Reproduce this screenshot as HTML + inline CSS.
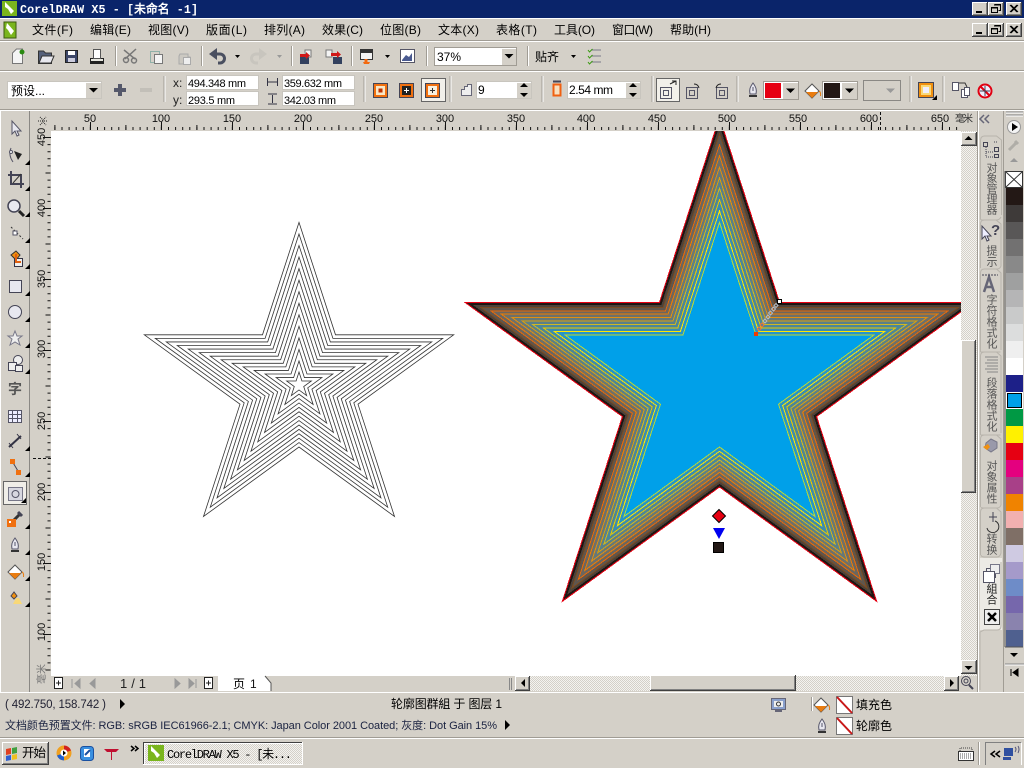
<!DOCTYPE html>
<html><head><meta charset="utf-8"><style>
html,body{margin:0;padding:0;background:#d4d0c8;overflow:hidden;width:1024px;height:768px}
svg{display:block;position:absolute;left:0;top:0}
text{font-family:"Liberation Sans","WenQuanYi Zen Hei","Noto Sans CJK SC",sans-serif;font-size:12px;fill:#000}
.m{font-family:"Liberation Mono","WenQuanYi Zen Hei",monospace}
.r{font-size:11px;text-anchor:middle;fill:#111}
.v{font-size:11px;writing-mode:vertical-rl;fill:#555}
.n{font-size:11px}
</style></head><body>
<svg width="1024" height="768" viewBox="0 0 1024 768" xmlns="http://www.w3.org/2000/svg">
<defs>
<pattern id="h" width="2" height="2" patternUnits="userSpaceOnUse"><rect width="2" height="2" fill="#f4f3f0"/><rect width="1" height="1" fill="#d4d0c8"/><rect x="1" y="1" width="1" height="1" fill="#d4d0c8"/></pattern>
<polygon id="st" vector-effect="non-scaling-stroke" points="0,-162.6 36.5,-50.2 154.7,-50.2 59,19.2 95.5,131.5 0,62 -95.5,131.5 -59,19.2 -154.7,-50.2 -36.5,-50.2"/>
<g id="wb"><rect width="16" height="14" fill="#404040"/><rect width="15" height="13" fill="#fff"/><rect x="1" y="1" width="14" height="12" fill="#808080"/><rect x="1" y="1" width="13" height="11" fill="#d4d0c8"/></g>
<g id="wmin"><use href="#wb"/><rect x="4" y="9" width="6" height="2"/></g>
<g id="wmax"><use href="#wb"/><path d="M6.5 2.500h6v6h-2M6 3h7M3.500 5.500h6v5h-6zM3 6h7" fill="none" stroke="#000"/></g>
<g id="wcl"><use href="#wb"/><path d="M4 3l7 7M5 3l7 7M11 3l-7 7M12 3l-7 7" stroke="#000" fill="none"/></g>
<g id="pen"><path d="M0-7C-3-3-4 0-3 4H3C4 0 3-3 0-7Z" fill="#e8e8f0" stroke="#55556a"/><path d="M0-3V1" stroke="#55556a"/><rect x="-4" y="5" width="8" height="2" fill="#333"/></g>
<g id="fillb"><path d="M-7 0L0-7L7 0L0 7Z" fill="#fff" stroke="#555"/><path d="M-6 1H6L0 7Z" fill="#e97c10"/><path d="M7 0q2 1 1.500 5" fill="none" stroke="#e97c10"/></g>
<path id="tri" d="M0 0h5l-2.500 3z"/>
<path id="tr2" d="M0 0h9l-4.500 4.500z"/>
<path id="mk" d="M5 0V5H0Z"/>
</defs>

<rect width="1024" height="768" fill="#d4d0c8"/>
<!-- title bar -->
<rect width="1024" height="18" fill="#0a246a"/>
<rect x="2" y="1" width="15" height="15" fill="#7ab51d"/><path d="M5 2l9 9-3 3-3-5-3-2z" fill="#fff"/>
<text class="m" x="20" y="13" style="font-size:11.7px;font-weight:bold;fill:#fff" textLength="178">CorelDRAW X5 - [未命名 -1]</text>
<use href="#wmin" x="972" y="2"/><use href="#wmax" x="988" y="2"/><use href="#wcl" x="1006" y="2"/>
<!-- menu bar -->
<rect y="18" width="1024" height="1" fill="#fff"/>
<rect x="4" y="22" width="12" height="16" fill="#7ab51d" stroke="#3c5a10"/><path d="M7 23l7 8-3 4-3-5-2-2z" fill="#fff"/>
<g>
<text x="32" y="34" textLength="41">文件(F)</text>
<text x="90" y="34" textLength="41">编辑(E)</text>
<text x="148" y="34" textLength="41">视图(V)</text>
<text x="206" y="34" textLength="41">版面(L)</text>
<text x="264" y="34" textLength="41">排列(A)</text>
<text x="322" y="34" textLength="41">效果(C)</text>
<text x="380" y="34" textLength="41">位图(B)</text>
<text x="438" y="34" textLength="41">文本(X)</text>
<text x="496" y="34" textLength="41">表格(T)</text>
<text x="554" y="34" textLength="41">工具(O)</text>
<text x="612" y="34" textLength="41">窗口(W)</text>
<text x="670" y="34" textLength="41">帮助(H)</text>
</g>
<use href="#wmin" x="972" y="23"/><use href="#wmax" x="988" y="23"/><use href="#wcl" x="1006" y="23"/>
<rect y="40" width="1024" height="1" fill="#a09c94"/><rect y="41" width="1024" height="1" fill="#fff"/>
<!-- toolbar 1 -->
<g fill="none">
<path d="M12.500 63.500V53l4-4h6v14.500z" fill="#f4f4f4" stroke="#777"/><circle cx="22" cy="52" r="2.500" fill="#2a8a10"/>
<path d="M38.500 63.500V51h5l2 2h6v10.500z" fill="#55607a" stroke="#333"/><path d="M39 63l3-7h12l-3 7z" fill="#e8e8ee" stroke="#333"/>
<rect x="65.500" y="50.500" width="12" height="12" fill="#3c4668" stroke="#222"/><rect x="68" y="51" width="7" height="4" fill="#fff"/><rect x="68" y="58" width="7" height="4" fill="#ccd"/>
<path d="M90.500 58.500h13v5h-13z" fill="#e8e8e0" stroke="#222"/><rect x="93.500" y="49.500" width="7" height="9" fill="#fff" stroke="#555"/><rect x="91" y="61" width="12" height="2" fill="#222"/>
<path d="M115.500 46v20" stroke="#a09c94"/><path d="M116.500 46v20" stroke="#fff"/>
<g stroke="#777" stroke-width="1.500"><path d="M124 50l11 9M136 49l-11 10"/><circle cx="126" cy="60" r="2.500"/><circle cx="134" cy="60.500" r="2.500"/></g>
<rect x="150.500" y="51.500" width="9" height="11" stroke="#8fb0a8"/><rect x="154.500" y="54.500" width="8" height="9" fill="#f4f4f4" stroke="#777"/>
<path d="M180 54h8v3h2v7h-11v-8z" fill="#ccc9c2" stroke="#aaa"/><rect x="183.500" y="57.500" width="7" height="7" fill="#eee" stroke="#aaa"/>
<path d="M201.500 46v20" stroke="#a09c94"/><path d="M202.500 46v20" stroke="#fff"/>
<path d="M212 54h8a4.500 4.500 0 0 1 0 9h-2" stroke="#4a4f60" stroke-width="3"/><path d="M217 48v12l-8-6z" fill="#4a4f60"/>
<path d="M264 54h-8a4.500 4.500 0 0 0 0 9h2" stroke="#c8c5be" stroke-width="3"/><path d="M259 48v12l8-6z" fill="#c8c5be"/>
<use href="#tri" x="235" y="55" fill="#000"/><use href="#tri" x="277" y="55" fill="#999"/>
<path d="M291.500 46v20" stroke="#a09c94"/><path d="M292.500 46v20" stroke="#fff"/>
<rect x="300" y="57" width="9" height="7" fill="#33415f"/><path d="M305 52v-2h6v7h-5z" fill="#f4f4f4" stroke="#777"/><path d="M300 54h6v-2l4 3.500-4 3.500v-2h-6z" fill="#d01818"/>
<rect x="333" y="57" width="9" height="7" fill="#33415f"/><path d="M326 50h6v7h-6z" fill="#f4f4f4" stroke="#777"/><path d="M331 53h6v-2l4 3.500-4 3.500v-2h-6z" fill="#d01818"/>
<path d="M351.500 46v20" stroke="#a09c94"/><path d="M352.500 46v20" stroke="#fff"/>
<rect x="360.500" y="49.500" width="12" height="10" fill="#f4f4f4" stroke="#333"/><rect x="361" y="50" width="11" height="3" fill="#333"/><path d="M363 62h7l-1 2h-5z" fill="#f36a10"/><path d="M366 59v4" stroke="#f36a10" stroke-width="3"/>
<use href="#tri" x="385" y="55" fill="#000"/>
<rect x="400.500" y="49.500" width="14" height="13" fill="#fff" stroke="#556"/><path d="M402 60l4-5 3 2 3-4v8h-10z" fill="#4a5a90"/>
<path d="M426.500 46v20" stroke="#a09c94"/><path d="M427.500 46v20" stroke="#fff"/>
<rect x="434.500" y="47.500" width="82" height="18" fill="#fff" stroke="#a09c94"/><rect x="502" y="49" width="14" height="16" fill="#d4d0c8"/>
</g>
<text x="437" y="61">37%</text>
<use href="#tr2" x="504.500" y="54" fill="#000"/>
<path d="M527.500 46v20" stroke="#a09c94"/><path d="M528.500 46v20" stroke="#fff"/>
<text x="535" y="61" textLength="24">贴齐</text>
<use href="#tri" x="571" y="55" fill="#000"/>
<g fill="none" stroke="#778"><path d="M591 50h10M591 56h10M591 62h10"/></g><g fill="none" stroke="#3a9a10"><path d="M588 50l1.500 2 3-3M588 56l1.500 2 3-3M588 62l1.500 2 3-3"/></g>
<rect y="70" width="1024" height="1" fill="#a09c94"/><rect y="71" width="1024" height="1" fill="#fff"/>
<!-- property bar -->
<rect x="7.500" y="81.500" width="94" height="17" fill="#fff" stroke="#c8c5be"/><rect x="86" y="83" width="15" height="15" fill="#d4d0c8"/>
<text x="11" y="95">预设...</text><use href="#tr2" x="89" y="88" fill="#000"/>
<path d="M114 88h12v4h-12zM118 84h4v12h-4z" fill="#55586a"/><rect x="140" y="88" width="12" height="4" fill="#c2bfb8"/>
<path d="M164 76v26" stroke="#a09c94"/><path d="M165 76v26" stroke="#fff"/>
<text x="173" y="87" style="fill:#222">x:</text><text x="173" y="104" style="fill:#222">y:</text>
<g fill="#fff" stroke="#c8c5be"><rect x="186.500" y="75.500" width="72" height="14"/><rect x="186.500" y="91.500" width="72" height="14"/><rect x="282.500" y="75.500" width="72" height="14"/><rect x="282.500" y="91.500" width="72" height="14"/></g>
<text class="n" x="188" y="87" textLength="58">494.348 mm</text><text class="n" x="188" y="104" textLength="47">293.5 mm</text>
<text class="n" x="284" y="87" textLength="58">359.632 mm</text><text class="n" x="284" y="104" textLength="52">342.03 mm</text>
<g fill="none" stroke="#334"><path d="M267.500 78v8M277.500 78v8M268 82h9"/><path d="M268 94h9M268 104h9M272.500 95v8"/></g>
<path d="M364 76v26" stroke="#a09c94"/><path d="M365 76v26" stroke="#fff"/>
<rect x="421.500" y="78.500" width="24" height="23" fill="#f2f0ea" stroke="#666"/>
<g><rect x="373.500" y="83.500" width="14" height="14" fill="#f07010" stroke="#445"/><rect x="376" y="86" width="9" height="9" fill="#f8e8c8"/><rect x="378.500" y="88.500" width="4" height="4" fill="#c03000"/>
<rect x="399.500" y="83.500" width="14" height="14" fill="#f07010" stroke="#445"/><rect x="402" y="86" width="9" height="9" fill="#222"/><path d="M404 90.500h5M406.500 88v5" stroke="#fff"/>
<rect x="425.500" y="83.500" width="14" height="14" fill="#f07010" stroke="#445"/><rect x="428" y="86" width="9" height="9" fill="#f8f0e0"/><path d="M430 90.500h5M432.500 88v5" stroke="#333"/></g>
<path d="M450 76v26" stroke="#a09c94"/><path d="M451 76v26" stroke="#fff"/>
<path d="M461.500 95.500v-6h3v-3h3v-2h4v11z" fill="#eee" stroke="#667"/>
<rect x="476.500" y="81.500" width="55" height="17" fill="#fff" stroke="#c8c5be"/><rect x="517" y="83" width="14" height="15" fill="#d4d0c8"/>
<text x="478" y="94">9</text><path d="M524 83l4 4h-8zM524 97l4-4h-8z" fill="#000"/>
<path d="M542 76v26" stroke="#a09c94"/><path d="M543 76v26" stroke="#fff"/>
<rect x="553.500" y="84.500" width="7" height="11" fill="#f8e0c0" stroke="#f06010" stroke-width="2"/><path d="M553 81.500h8" stroke="#445" stroke-width="2"/>
<rect x="567.500" y="81.500" width="73" height="17" fill="#fff" stroke="#c8c5be"/><rect x="626" y="83" width="14" height="15" fill="#d4d0c8"/>
<text x="569" y="94" textLength="44">2.54 mm</text><path d="M633 83l4 4h-8zM633 97l4-4h-8z" fill="#000"/>
<path d="M652 76v26" stroke="#a09c94"/><path d="M653 76v26" stroke="#fff"/>
<rect x="656.500" y="78.500" width="23" height="23" fill="#f2f0ea" stroke="#666"/>
<g fill="none" stroke="#556"><rect x="660.500" y="87.500" width="11" height="11"/><rect x="663.500" y="90.500" width="5" height="5"/><path d="M670 84l6-3m0 4v-4h-4" stroke="#222"/>
<rect x="686.500" y="87.500" width="11" height="11"/><rect x="689.500" y="90.500" width="5" height="5"/><path d="M694 84q4 0 5 4" stroke="#222"/>
<rect x="716.500" y="87.500" width="11" height="11"/><rect x="719.500" y="90.500" width="5" height="5"/><path d="M721 84q-4 0-5 4" stroke="#222"/></g>
<path d="M737 76v26" stroke="#a09c94"/><path d="M738 76v26" stroke="#fff"/>
<use href="#pen" x="753" y="90"/>
<rect x="763.500" y="81.500" width="35" height="18" fill="#fff" stroke="#a09c94"/><rect x="765" y="83" width="16" height="15" fill="#e60012"/><rect x="783" y="83" width="15" height="16" fill="#d4d0c8"/><use href="#tr2" x="786" y="88.500" fill="#000"/>
<use href="#fillb" x="812" y="91"/>
<rect x="822.500" y="81.500" width="35" height="18" fill="#fff" stroke="#a09c94"/><rect x="824" y="83" width="16" height="15" fill="#231815"/><rect x="842" y="83" width="15" height="16" fill="#d4d0c8"/><use href="#tr2" x="845" y="88.500" fill="#000"/>
<rect x="863.500" y="80.500" width="37" height="20" fill="#d4d0c8" stroke="#8a8884"/><use href="#tr2" x="886" y="88.500" fill="#999"/>
<path d="M910 76v26" stroke="#a09c94"/><path d="M911 76v26" stroke="#fff"/>
<rect x="918.500" y="82.500" width="15" height="15" fill="#f09010" stroke="#445"/><rect x="921" y="85" width="10" height="10" fill="#f8d878"/><rect x="923" y="87" width="6" height="6" fill="#eef"/><use href="#mk" x="932" y="95" fill="#000"/>
<path d="M943 76v26" stroke="#a09c94"/><path d="M944 76v26" stroke="#fff"/>
<g fill="#fff" stroke="#556"><rect x="952.500" y="82.500" width="6" height="8"/><rect x="961.500" y="89.500" width="6" height="8"/><rect x="964.500" y="87.500" width="5" height="8"/><path d="M959 83h6l2 4" fill="none" stroke="#333"/></g>
<circle cx="985" cy="91" r="6.500" fill="#eef" stroke="#e00012" stroke-width="2"/><path d="M980.500 86.500l9 9" stroke="#e00012" stroke-width="2"/><path d="M985 86v10M980 91h10" stroke="#445"/>
<rect y="109" width="1024" height="1" fill="#a09c94"/><rect y="110" width="1024" height="1" fill="#fff"/>

<!-- canvas -->
<rect x="51" y="131" width="910" height="545" fill="#fff"/>
<path d="M51 130.500H961" stroke="#8a8884"/><path d="M50.500 130V676" stroke="#8a8884"/>
<g transform="translate(299 385)" fill="none" stroke="#333" stroke-width=".8">
<use href="#st"/>
<use href="#st" transform="scale(.929)"/><use href="#st" transform="scale(.858)"/><use href="#st" transform="scale(.787)"/><use href="#st" transform="scale(.716)"/><use href="#st" transform="scale(.645)"/><use href="#st" transform="scale(.574)"/><use href="#st" transform="scale(.503)"/><use href="#st" transform="scale(.432)"/><use href="#st" transform="scale(.361)"/><use href="#st" transform="scale(.29)"/><use href="#st" transform="scale(.219)"/><use href="#st" transform="scale(.148)"/><use href="#st" transform="scale(.08)"/>
</g>
<svg x="51" y="131" width="910" height="545" viewBox="51 131 910 545" style="position:static">
<g transform="translate(719.500 385)" shape-rendering="crispEdges">
<use href="#st" transform="scale(1.645)" fill="#231815" stroke="#e60012"/>
<use href="#st" transform="scale(1.605)" fill="#4c423a" stroke="#1c1410"/>
<use href="#st" transform="scale(1.545)" fill="#5f564e" stroke="#7a4a20"/>
<use href="#st" transform="scale(1.478)" fill="#6c665e" stroke="#e86a08"/>
<use href="#st" transform="scale(1.41)" fill="#6e706a" stroke="#f07d00"/>
<use href="#st" transform="scale(1.34)" fill="#667878" stroke="#e09010"/>
<use href="#st" transform="scale(1.275)" fill="#5a8088" stroke="#d8a010"/>
<use href="#st" transform="scale(1.21)" fill="#4c8698" stroke="#d0b820"/>
<use href="#st" transform="scale(1.14)" fill="#3c8cae" stroke="#e8c800"/>
<use href="#st" transform="scale(1.07)" fill="#2694c8" stroke="#ffe600"/>
<use href="#st" transform="scale(1.0)" fill="#00a0e9" stroke="#b8d838"/>
</g>
</svg>
<!-- vector handle -->
<g fill="none" stroke-width="1">
<path d="M759 327l2 2-2 2-2-2zM762 323l2 2-2 2-2-2z" stroke="#e87040"/>
<path d="M765 319l2 2-2 2-2-2zM768 315l2 2-2 2-2-2zM770.500 311l2 2-2 2-2-2zM773.500 307l2 2-2 2-2-2zM776 303.500l2 2-2 2-2-2z" stroke="#b4bcc4"/>
</g>
<rect x="754" y="332" width="4" height="4" fill="#f03c00"/>
<rect x="777.500" y="299.500" width="4" height="4" fill="#fff" stroke="#000"/>
<!-- markers -->
<path d="M719 509.500l6.500 6.500-6.500 6.500-6.500-6.500z" fill="#e60012" stroke="#000"/>
<path d="M713 528h12l-6 11z" fill="#0000f0"/>
<rect x="713.500" y="542.500" width="10" height="10" fill="#231815" stroke="#000"/>

<!-- ruler -->
<rect x="30" y="111" width="994" height="20" fill="#d4d0c8"/>
<rect x="30" y="111" width="21" height="565" fill="#d4d0c8"/>
<path d="M29.500 111V692" stroke="#8a8884"/>
<path d="M40 117l3 3 3-3m-6 8l3-3 3 3M38 121h10" stroke="#222" fill="none" stroke-dasharray="1 1"/>
<g fill="none" stroke="#111">
<path d="M54 128.500H960" stroke-width="3" stroke-dasharray="1 6.100" stroke-dashoffset="-.4"/>
<path d="M54 127.500H960" stroke-width="5" stroke-dasharray="1 34.500" stroke-dashoffset="-.4"/>
<path d="M90 126H960" stroke-width="8" stroke-dasharray="1 70"/>
<path d="M49 137V675" stroke-width="3" stroke-dasharray="1 6.100"/>
<path d="M48 137V675" stroke-width="5" stroke-dasharray="1 34.500"/>
<path d="M47 137V675" stroke-width="8" stroke-dasharray="1 70"/>
<path d="M880.500 112V130" stroke-dasharray="3 2"/><path d="M33 458.500H51" stroke-dasharray="3 2"/>
</g>
<g>
<text class="r" x="90" y="122">50</text><text class="r" x="161" y="122">100</text><text class="r" x="232" y="122">150</text><text class="r" x="303" y="122">200</text><text class="r" x="374" y="122">250</text><text class="r" x="445" y="122">300</text><text class="r" x="516" y="122">350</text><text class="r" x="586" y="122">400</text><text class="r" x="657" y="122">450</text><text class="r" x="727" y="122">500</text><text class="r" x="798" y="122">550</text><text class="r" x="869" y="122">600</text><text class="r" x="940" y="122">650</text>
<text x="955" y="122" style="font-size:10px;fill:#333" textLength="18">毫米</text>
<text class="r" transform="translate(45 137) rotate(-90)">450</text><text class="r" transform="translate(45 208) rotate(-90)">400</text><text class="r" transform="translate(45 279) rotate(-90)">350</text><text class="r" transform="translate(45 349) rotate(-90)">300</text><text class="r" transform="translate(45 421) rotate(-90)">250</text><text class="r" transform="translate(45 492) rotate(-90)">200</text><text class="r" transform="translate(45 562) rotate(-90)">150</text><text class="r" transform="translate(45 632) rotate(-90)">100</text>
<text transform="translate(45 684) rotate(-90)" style="font-size:10px;fill:#777">毫米</text>
</g>

<!-- left toolbox -->
<rect x="0" y="111" width="1" height="581" fill="#fff"/>
<g fill="none" stroke="#556">
<path d="M12 121v13l3-3 2 5 2-1-2-4h4z" fill="#e8e8f0"/>
<path d="M11 148q-3 7 2 14" /><circle cx="11" cy="152" r="1.500" fill="#fff"/><path d="M14 151l8 3-4 6z" fill="#222" stroke="none"/>
<path d="M11 171v13h13M8 175h13v13" stroke="#445" stroke-width="2"/><path d="M21 174l-8 9" stroke="#333"/>
<circle cx="14" cy="206" r="6" fill="#e8e8f0" stroke="#445" stroke-width="1.500"/><path d="M19 211l5 5" stroke="#222" stroke-width="3"/>
<path d="M11 227l12 12" stroke="#333" stroke-dasharray="2 2"/><rect x="13" y="231" width="4" height="4" fill="#fff"/>
<path d="M11 255l5-4 4 4-4 5z" fill="#f09010" stroke="#333"/><rect x="14.500" y="258.500" width="8" height="8" fill="#eee" stroke="#334"/><path d="M16 254v8h5" stroke="#e06010" stroke-width="2"/>
<rect x="9.500" y="280.500" width="12" height="12" fill="#e8e8f0" stroke="#445"/>
<circle cx="15" cy="312" r="6.500" fill="#e8e8f0" stroke="#445"/>
<path d="M15 331l2 5h5l-4 3 2 6-5-3-5 3 2-6-4-3h5z" fill="#eee" stroke="#778"/>
<circle cx="18" cy="360" r="4.500" fill="#eee" stroke="#445"/><rect x="8.500" y="362.500" width="8" height="8" fill="#eee" stroke="#445"/><rect x="15.500" y="365.500" width="7" height="6" fill="#eee" stroke="#445"/>
</g>
<text x="8" y="394" style="font-size:14px;font-weight:bold;fill:#555" textLength="14">字</text>
<g fill="none" stroke="#556">
<rect x="8.500" y="410.500" width="13" height="12" fill="#eef"/><path d="M8.500 414.500h13M8.500 418.500h13M12.500 410.500v12M17.500 410.500v12"/>
<path d="M9 447l12-11" stroke="#334" stroke-width="2"/><path d="M9 443l4 5M17 434l4 5" stroke="#334"/>
<path d="M12 461l6 10" stroke="#445"/><rect x="10" y="459" width="5" height="5" fill="#f07010" stroke="none"/><rect x="16" y="470" width="5" height="5" fill="#f07010" stroke="none"/>
<rect x="3.500" y="481.500" width="23" height="23" fill="#f0eee8" stroke="#666"/>
<rect x="8.500" y="487.500" width="14" height="13" fill="#d8d8e0" stroke="#778"/><circle cx="15.500" cy="494" r="3.500"/>
<path d="M11 523l9-9" stroke="#333" stroke-width="3"/><path d="M18 512l4 4" stroke="#445" stroke-width="3"/>
</g>
<rect x="7" y="519" width="9" height="8" fill="#f07010"/><rect x="9" y="521" width="2" height="2" fill="#fff"/>
<use href="#pen" x="15" y="545"/>
<use href="#fillb" x="15" y="572"/>
<path d="M14 592l-3 4 3 3 3-3z" fill="#f09010" stroke="#445"/><path d="M16 598l-3 6h9l-3-6z" fill="#f8d878"/>
<g fill="#000"><use href="#mk" x="25" y="160"/><use href="#mk" x="25" y="186"/><use href="#mk" x="25" y="212"/><use href="#mk" x="25" y="238"/><use href="#mk" x="25" y="264"/><use href="#mk" x="25" y="291"/><use href="#mk" x="25" y="317"/><use href="#mk" x="25" y="343"/><use href="#mk" x="25" y="369"/><use href="#mk" x="25" y="446"/><use href="#mk" x="25" y="472"/><use href="#mk" x="21" y="498"/><use href="#mk" x="25" y="524"/><use href="#mk" x="25" y="550"/><use href="#mk" x="25" y="576"/><use href="#mk" x="25" y="602"/></g>

<!-- vertical scrollbar -->
<rect x="961" y="131" width="16" height="545" fill="url(#h)"/>
<use href="#wb" transform="translate(961 132)"/><path d="M968.500 136l4 4h-8z"/>
<rect x="961" y="340" width="15" height="153" fill="#404040"/><rect x="961" y="340" width="14" height="152" fill="#fff"/><rect x="962" y="341" width="13" height="151" fill="#808080"/><rect x="962" y="341" width="12" height="150" fill="#d4d0c8"/>
<use href="#wb" transform="translate(961 660)"/><path d="M968.500 670l4-4h-8z"/>
<g fill="none" stroke="#445"><circle cx="966" cy="681" r="4.500"/><circle cx="966" cy="681" r="2"/><path d="M969 685l4 4" stroke-width="2"/></g>

<!-- docker tabs -->
<rect x="977" y="111" width="47" height="581" fill="#d4d0c8"/>
<path d="M977.500 111V692M1003.500 111V692" stroke="#a09c94"/><path d="M978.500 111V692" stroke="#fff"/>
<path d="M984 115l-4 4 4 4m5-8l-4 4 4 4M989 115" fill="none" stroke="#667" stroke-width="1.500"/>
<rect x="980" y="558" width="22" height="72" fill="#eceae5"/>
<g fill="none" stroke="#b8b4ac">
<path d="M980.500 219V141q0-5 4-5h12l5 4V215"/>
<path d="M980.500 219q0 1 2 1h14q3 0 4.500-3M980.500 268V224q0-4 4-4h12M996 220l5 4V266q-1 3-4 3h-13"/>
<path d="M980.500 352V273q0-4 4-4h12l4.500 4V350"/>
<path d="M980.500 352h20M980.500 435V356q0-4 4-4h12l4.500 4V433"/>
<path d="M980.500 435h20M980.500 507V439q0-4 4-4h12l4.500 4V505q-1 3-4 3h-12q-4 0-4-1"/>
<path d="M980.500 555V512q0-4 4-4h12l4.500 4V553q-1 4-4 4h-12q-4 0-4-2"/>
<path d="M1001 562V626q0 4-4 4h-13l-4 2V690"/>
</g>
<g fill="none" stroke="#445">
<rect x="983.500" y="142.500" width="4" height="4"/><rect x="994.500" y="147.500" width="4" height="4"/><rect x="994.500" y="154.500" width="4" height="3"/><path d="M986 147v10h8M986 152h8" stroke-dasharray="1 1"/><path d="M994 142h4" stroke-dasharray="1 1"/>
<path d="M982 226v13l3-3 2 5 2-1-2-4h4z" fill="#eef"/>
<path d="M984 292l5-15 5 15M985 287h8" stroke-width="2.500" stroke="#667"/><path d="M982 275h16" stroke-dasharray="2 1"/>
<path d="M985 357h13M987 360h11M985 363h13M987 366h11M985 369h13M987 372h11" stroke="#888"/>
<path d="M986 443l5-4 6 3v6l-6 4-6-4z" fill="#99a" stroke="#778"/><path d="M983 447l5-3 2 3-3 3z" fill="#f09010" stroke="none"/>
<path d="M995 521a6 6 0 1 1-8 7" stroke="#333"/><path d="M993 512v10M989 517h8" stroke="#445"/>
<rect x="986.500" y="568.500" width="9" height="9" fill="#eee" stroke="#556"/><rect x="990.500" y="564.500" width="9" height="9" fill="#eee" stroke="#778"/><rect x="983.500" y="571.500" width="11" height="11" fill="#fff" stroke="#556"/>
</g>
<text x="991" y="235" style="font-size:15px;font-weight:bold;fill:#445">?</text>
<text class="v" x="991" y="162" textLength="53">对象管理器</text>
<text class="v" x="991" y="245">提示</text>
<text class="v" x="991" y="294">字符格式化</text>
<text class="v" x="991" y="377">段落格式化</text>
<text class="v" x="991" y="460">对象属性</text>
<text class="v" x="991" y="533">转换</text>
<text class="v" x="991" y="583" style="fill:#222">組合</text>
<rect x="984.500" y="609.500" width="15" height="15" fill="#eee" stroke="#444"/><path d="M988 613l8 8m0-8l-8 8" stroke="#000" stroke-width="2.500"/>

<!-- palette -->
<path d="M1006 112h17M1006 115h17" stroke="#888"/><path d="M1006 113h17M1006 116h17" stroke="#fff"/>
<circle cx="1014" cy="127" r="6.500" fill="#f4f4f4" stroke="#999"/><path d="M1012 123l6 4-6 4z" fill="#000"/>
<path d="M1009 150l7-7M1015 141l3 3" stroke="#b0aea8" stroke-width="3"/>
<path d="M1014 158l4 4h-8z" fill="#999"/>
<g>
<rect x="1005.500" y="171.500" width="17" height="16" fill="#fff" stroke="#333"/><path d="M1006 172l16 15m0-15l-16 15" stroke="#333"/>
<rect x="1006" y="188" width="17" height="17" fill="#231815"/>
<rect x="1006" y="205" width="17" height="17" fill="#3e3a39"/>
<rect x="1006" y="222" width="17" height="17" fill="#595757"/>
<rect x="1006" y="239" width="17" height="17" fill="#727171"/>
<rect x="1006" y="256" width="17" height="17" fill="#898989"/>
<rect x="1006" y="273" width="17" height="17" fill="#9fa0a0"/>
<rect x="1006" y="290" width="17" height="17" fill="#b5b5b6"/>
<rect x="1006" y="307" width="17" height="17" fill="#c9caca"/>
<rect x="1006" y="324" width="17" height="17" fill="#dcdddd"/>
<rect x="1006" y="341" width="17" height="17" fill="#efefef"/>
<rect x="1006" y="358" width="17" height="17" fill="#fff"/>
<rect x="1006" y="375" width="17" height="17" fill="#1d2088"/>
<rect x="1006" y="392" width="17" height="17" fill="#fff"/><rect x="1007.500" y="393.500" width="14" height="14" fill="#00a0e9" stroke="#000"/>
<rect x="1006" y="409" width="17" height="17" fill="#009944"/>
<rect x="1006" y="426" width="17" height="17" fill="#fff100"/>
<rect x="1006" y="443" width="17" height="17" fill="#e60012"/>
<rect x="1006" y="460" width="17" height="17" fill="#e4007f"/>
<rect x="1006" y="477" width="17" height="17" fill="#a84088"/>
<rect x="1006" y="494" width="17" height="17" fill="#f08300"/>
<rect x="1006" y="511" width="17" height="17" fill="#f2b0b0"/>
<rect x="1006" y="528" width="17" height="17" fill="#7f6f66"/>
<rect x="1006" y="545" width="17" height="17" fill="#cfcae2"/>
<rect x="1006" y="562" width="17" height="17" fill="#a59aca"/>
<rect x="1006" y="579" width="17" height="17" fill="#6e8cc8"/>
<rect x="1006" y="596" width="17" height="17" fill="#7667ac"/>
<rect x="1006" y="613" width="17" height="17" fill="#8a83ae"/>
<rect x="1006" y="630" width="17" height="17" fill="#4f608f"/>
</g>
<path d="M1005 171V647M1005 647H1023" stroke="#555" fill="none"/>
<path d="M1014 657l4-4h-8z"/><path d="M1005 664h19" stroke="#888"/><path d="M1005 665h19" stroke="#fff"/>
<path d="M1011 669v7M1018 669v7l-5-3.500z" stroke="#000" fill="#000"/>

<!-- bottom page nav -->
<rect x="51" y="676" width="910" height="15" fill="#d4d0c8"/>
<rect x="54.500" y="677.500" width="8" height="11" fill="#fff" stroke="#222"/><path d="M56 683h5M58.500 680.500v5" stroke="#222"/>
<path d="M72 679v9M80 679v9l-5-4.500z" stroke="#999" fill="#999"/>
<path d="M95 679v9l-5-4.500z" fill="#999" stroke="#999"/>
<text x="120" y="688" style="font-size:13px;fill:#222" textLength="26">1 / 1</text>
<path d="M175 679v9l5-4.500z" fill="#999" stroke="#999"/>
<path d="M189 679v9l5-4.500zM196 679v9" fill="#999" stroke="#999"/>
<rect x="204.500" y="677.500" width="8" height="11" fill="#fff" stroke="#222"/><path d="M206 683h5M208.500 680.500v5" stroke="#222"/>
<path d="M218 676H265L271 683V691H218Z" fill="#fff"/><path d="M265 676L271 683V691" stroke="#555" fill="none"/>
<text x="233" y="688">页</text><text x="250" y="688" style="fill:#111">1</text>
<path d="M509.500 678V690M511.500 678V690" stroke="#888"/>
<rect x="530" y="676" width="415" height="15" fill="url(#h)"/>
<rect x="515" y="676" width="15" height="15" fill="#404040"/><rect x="515" y="676" width="14" height="14" fill="#fff"/><rect x="516" y="677" width="13" height="13" fill="#808080"/><rect x="516" y="677" width="12" height="12" fill="#d4d0c8"/><path d="M525 679v8l-4-4z"/>
<rect x="650" y="675" width="146" height="16" fill="#404040"/><rect x="650" y="675" width="145" height="15" fill="#fff"/><rect x="651" y="676" width="144" height="14" fill="#808080"/><rect x="651" y="676" width="143" height="13" fill="#d4d0c8"/>
<rect x="944" y="676" width="15" height="15" fill="#404040"/><rect x="944" y="676" width="14" height="14" fill="#fff"/><rect x="945" y="677" width="13" height="13" fill="#808080"/><rect x="945" y="677" width="12" height="12" fill="#d4d0c8"/><path d="M950 679v8l4-4z"/>
<rect y="692" width="1024" height="1" fill="#fff"/>

<!-- status -->
<text x="5" y="708" style="fill:#223;font-size:11.500px" textLength="101">( 492.750, 158.742 )</text>
<path d="M120 699v10l5-5z"/>
<text x="391" y="708" textLength="111">轮廓图群組 于 图层 1</text>
<text x="5" y="729" textLength="492" style="fill:#1a2240;font-size:11px">文档颜色预置文件: RGB: sRGB IEC61966-2.1; CMYK: Japan Color 2001 Coated; 灰度: Dot Gain 15%</text>
<path d="M505 720v10l5-5z"/>
<rect x="771.500" y="698.500" width="14" height="11" fill="#8aa0cc" stroke="#667"/><rect x="774" y="701" width="9" height="6" fill="#eee"/><circle cx="778.500" cy="704" r="2" fill="none" stroke="#333"/><rect x="775" y="710" width="7" height="2" fill="#667"/>
<path d="M811.500 697V711" stroke="#a09c94"/><path d="M812.500 697V711" stroke="#fff"/>
<use href="#fillb" x="821" y="705"/>
<use href="#pen" x="822" y="726"/>
<rect x="836.500" y="696.500" width="16" height="17" fill="#fff" stroke="#777"/><path d="M837 697l15 16" stroke="#c81818" stroke-width="2"/>
<rect x="836.500" y="717.500" width="16" height="17" fill="#fff" stroke="#777"/><path d="M837 718l15 16" stroke="#c81818" stroke-width="2"/>
<text x="856" y="709" textLength="36">填充色</text><text x="856" y="730" textLength="36">轮廓色</text>

<!-- taskbar -->
<rect y="737" width="1024" height="1" fill="#a09c94"/><rect y="738" width="1024" height="1" fill="#fff"/>
<rect x="2" y="742" width="47" height="23" fill="#404040"/><rect x="2" y="742" width="46" height="22" fill="#fff"/><rect x="3" y="743" width="45" height="21" fill="#808080"/><rect x="3" y="743" width="44" height="20" fill="#d4d0c8"/>
<path d="M6 749l5-1v6l-5 1z" fill="#e04020"/><path d="M12 748l5-1v6l-5 1z" fill="#40a040"/><path d="M6 756l5-1v5l-5 1z" fill="#3060d0"/><path d="M12 755l5-1v5l-5 1z" fill="#f0c020"/>
<text x="22" y="757" textLength="24" style="font-size:12.500px">开始</text>
<circle cx="64" cy="753" r="7.500" fill="#f0a020"/><path d="M64 745.500a7.500 7.500 0 0 1 7 5l-7 2.500z" fill="#d02020"/><path d="M64 760.500a7.500 7.500 0 0 1-7-5l7-2.500z" fill="#2060d0"/><circle cx="64" cy="753" r="3.500" fill="#fff"/><path d="M63 750.500l3 2.500-3 2.500z"/>
<rect x="80.500" y="746.500" width="13" height="14" rx="3" fill="#3a90e0" stroke="#1a50a0"/><path d="M84 749h6v8h-6z" fill="#fff"/><path d="M85 755l5-5" stroke="#1a50a0" stroke-width="2"/>
<path d="M104 749h15l-3 3h-4v8h-1v-8h-4z" fill="#c01030"/>
<path d="M131 746l3 2.500-3 2.500M135 746l3 2.500-3 2.500" fill="none" stroke="#000" stroke-width="1.500"/>
<rect x="143" y="742" width="160" height="23" fill="#fff"/><rect x="143" y="742" width="159" height="22" fill="#404040"/><rect x="144" y="743" width="159" height="22" fill="#fff"/><rect x="145" y="744" width="157" height="20" fill="url(#h)"/>
<rect x="148" y="745" width="16" height="16" fill="#7ab51d"/><path d="M151 746l9 9-3 3-3-5-3-2z" fill="#fff"/>
<text class="m" x="167" y="758" textLength="125" style="font-size:12px">CorelDRAW X5 - [未...</text>
<rect x="958.500" y="751.500" width="15" height="9" fill="#fff" stroke="#333"/><path d="M960 754h12M960 756h12M960 758h12" stroke="#555" stroke-dasharray="1 1"/><path d="M960 751v-3h12v3" fill="none" stroke="#444" stroke-dasharray="1 1"/>
<path d="M978.500 742V765" stroke="#a09c94"/><path d="M979.500 742V765" stroke="#fff"/>
<path d="M985.500 765V742.500H1021.500" fill="none" stroke="#808080"/><path d="M1021.500 742.500V765" stroke="#fff"/>
<path d="M995 751l-4 3 4 3m5-6l-4 3 4 3" fill="none" stroke="#000" stroke-width="1.500"/>
<rect x="1004" y="748" width="9" height="8" fill="#3050a0"/><rect x="1003" y="757" width="8" height="3" fill="#3050a0"/><path d="M1015 747q2 2 0 5M1018 746q2 3 0 7" fill="none" stroke="#557"/>
</svg>
</body></html>
